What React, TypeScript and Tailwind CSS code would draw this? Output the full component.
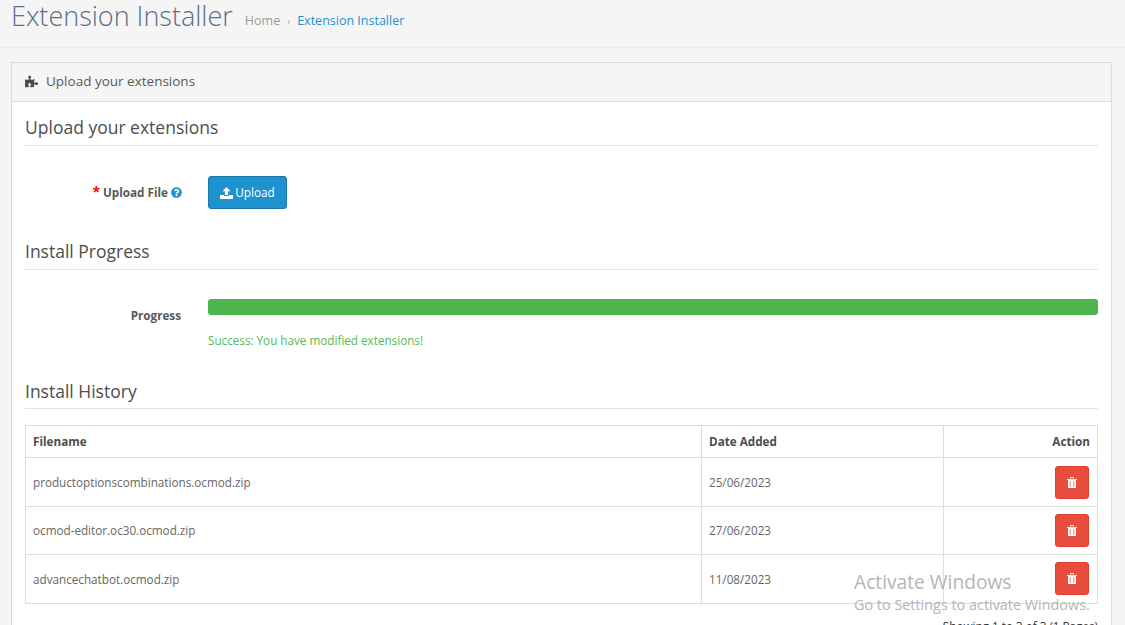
import { FaPuzzlePiece, FaQuestionCircle } from "react-icons/fa";

const history = [
  { file: "productoptionscombinations.ocmod.zip", date: "25/06/2023", h: "h-[49px]", pad: "pb-0" },
  { file: "ocmod-editor.oc30.ocmod.zip", date: "27/06/2023", h: "h-[48px]", pad: "pb-0" },
  { file: "advancechatbot.ocmod.zip", date: "11/08/2023", h: "h-[49px]", pad: "pb-[2px]" },
];

const UploadIcon = () => (
  <svg viewBox="0 0 13 12" className="h-[12px] w-[13px] fill-white">
    <path d="M6.5 0 10.5 4.2H8.1V8H4.9V4.2H2.5Z" />
    <path d="M0 8H3.8V9H9.2V8H13V12H0Z" />
  </svg>
);

// fa-trash-o: lid, handle and a body with two slots
const TrashIcon = () => (
  <svg viewBox="0 0 10 11" className="h-[11px] w-[10px]">
    <path d="M0 2H10V3H9V11H1V3H0Z" fill="white" />
    <path d="M3 0H7V2H6V1H4V2H3Z" fill="white" opacity="0.8" />
    <path d="M2.5 4H4V9.5H2.5ZM6 4H7.5V9.5H6Z" fill="#f2a59b" />
  </svg>
);

const App = () => {
  return (
    <div
      className="relative h-[625px] w-[1125px] overflow-hidden bg-[#f5f5f5] text-[11.7px] text-[#666666]"
      style={{ fontFamily: '"Open Sans", sans-serif' }}
    >
      {/* Page header */}
      <div className="flex h-[48px] items-start border-b border-[#ebebeb] pl-[11px]">
        <h1 className="mt-[-5px] text-[27px] leading-[42px] font-light text-[#5b6f88]">
          Extension Installer
        </h1>
        <div className="mt-[12px] ml-[12px] flex items-center text-[12.5px] leading-[18px]">
          <span className="text-[#999999]">Home</span>
          <span className="mx-[7px] text-[10px] text-[#aaaaaa]">›</span>
          <span className="text-[#1e91cf]">Extension Installer</span>
        </div>
      </div>

      {/* Panel */}
      <div className="mr-[13px] ml-[11px] mt-[14px] border border-[#dddddd] bg-white">
        <div className="flex h-[39px] items-center gap-[8px] border-b border-[#dddddd] bg-[#f5f5f5] pb-[2px] pl-[13px] text-[13.5px] text-[#595959]">
          <FaPuzzlePiece className="h-[13px] w-[13px] text-[#4a4a55]" />
          <span>Upload your extensions</span>
        </div>

        <div className="px-[13px]">
          <h2 className="mt-[13px] h-[31px] border-b border-[#e5e5e5] text-[17.5px] leading-[25px] text-[#4d4d4d]">
            Upload your extensions
          </h2>

          <div className="mt-[30px] flex items-center">
            <div className="flex w-[183px] items-center justify-end pr-[26px] font-bold text-[#595959]">
              <span className="mr-[3px] text-[14px] leading-[14px] text-[#ff0000]">*</span>
              <span>Upload File</span>
              <FaQuestionCircle className="ml-[3px] h-[11px] w-[11px] text-[#1e91cf]" />
            </div>
            <button className="flex h-[33px] w-[79px] items-center justify-center gap-[2px] rounded-[3px] border border-[#1978ab] bg-[#1e91cf] text-[11.7px] text-white">
              <UploadIcon />
              Upload
            </button>
          </div>

          <h2 className="mt-[30px] h-[31px] border-b border-[#e5e5e5] text-[17.5px] leading-[25px] text-[#4d4d4d]">
            Install Progress
          </h2>

          <div className="mt-[29px] flex">
            <div className="w-[183px] pt-[7px] pr-[27px] text-right leading-[18px] font-bold text-[#595959]">
              Progress
            </div>
            <div className="flex-1">
              <div className="h-[16px] rounded-[3px] bg-[#4cb64c]" />
              <div className="mt-[16px] leading-[18px] text-[#55b955]">
                Success: You have modified extensions!
              </div>
            </div>
          </div>

          <h2 className="mt-[30px] h-[30px] border-b border-[#e5e5e5] text-[17.5px] leading-[25px] text-[#4d4d4d]">
            Install History
          </h2>

          {/* History table */}
          <table className="mt-[16px] w-full table-fixed border-collapse border border-[#dddddd]">
            <thead>
              <tr className="h-[32px] font-bold text-[#4d4d4d]">
                <td className="w-[676px] border border-[#dddddd] pl-[7px]">Filename</td>
                <td className="w-[242px] border border-[#dddddd] pl-[7px]">Date Added</td>
                <td className="border border-[#dddddd] pr-[7px] text-right">Action</td>
              </tr>
            </thead>
            <tbody>
              {history.map((row) => (
                <tr key={row.file} className={row.h}>
                  <td className="border border-[#dddddd] pt-[1px] pl-[7px]">{row.file}</td>
                  <td className="border border-[#dddddd] pt-[1px] pl-[7px]">{row.date}</td>
                  <td className={`border border-[#dddddd] pr-[8px] ${row.pad}`}>
                    <button className="ml-auto flex h-[33px] w-[34px] items-center justify-center rounded-[3px] border border-[#e13f2a] bg-[#e74c3c] text-white">
                      <TrashIcon />
                    </button>
                  </td>
                </tr>
              ))}
            </tbody>
          </table>

          <div className="mt-[14px] text-right text-[#333333]">
            Showing 1 to 3 of 3 (1 Pages)
          </div>
        </div>
      </div>

      {/* Windows watermark */}
      <div className="absolute top-[568px] left-[854px] text-[#b5b5b5]">
        <div className="text-[19.2px] leading-[27px]">Activate Windows</div>
        <div className="text-[14.4px] leading-[19px]">Go to Settings to activate Windows.</div>
      </div>
    </div>
  );
};

export default App;
